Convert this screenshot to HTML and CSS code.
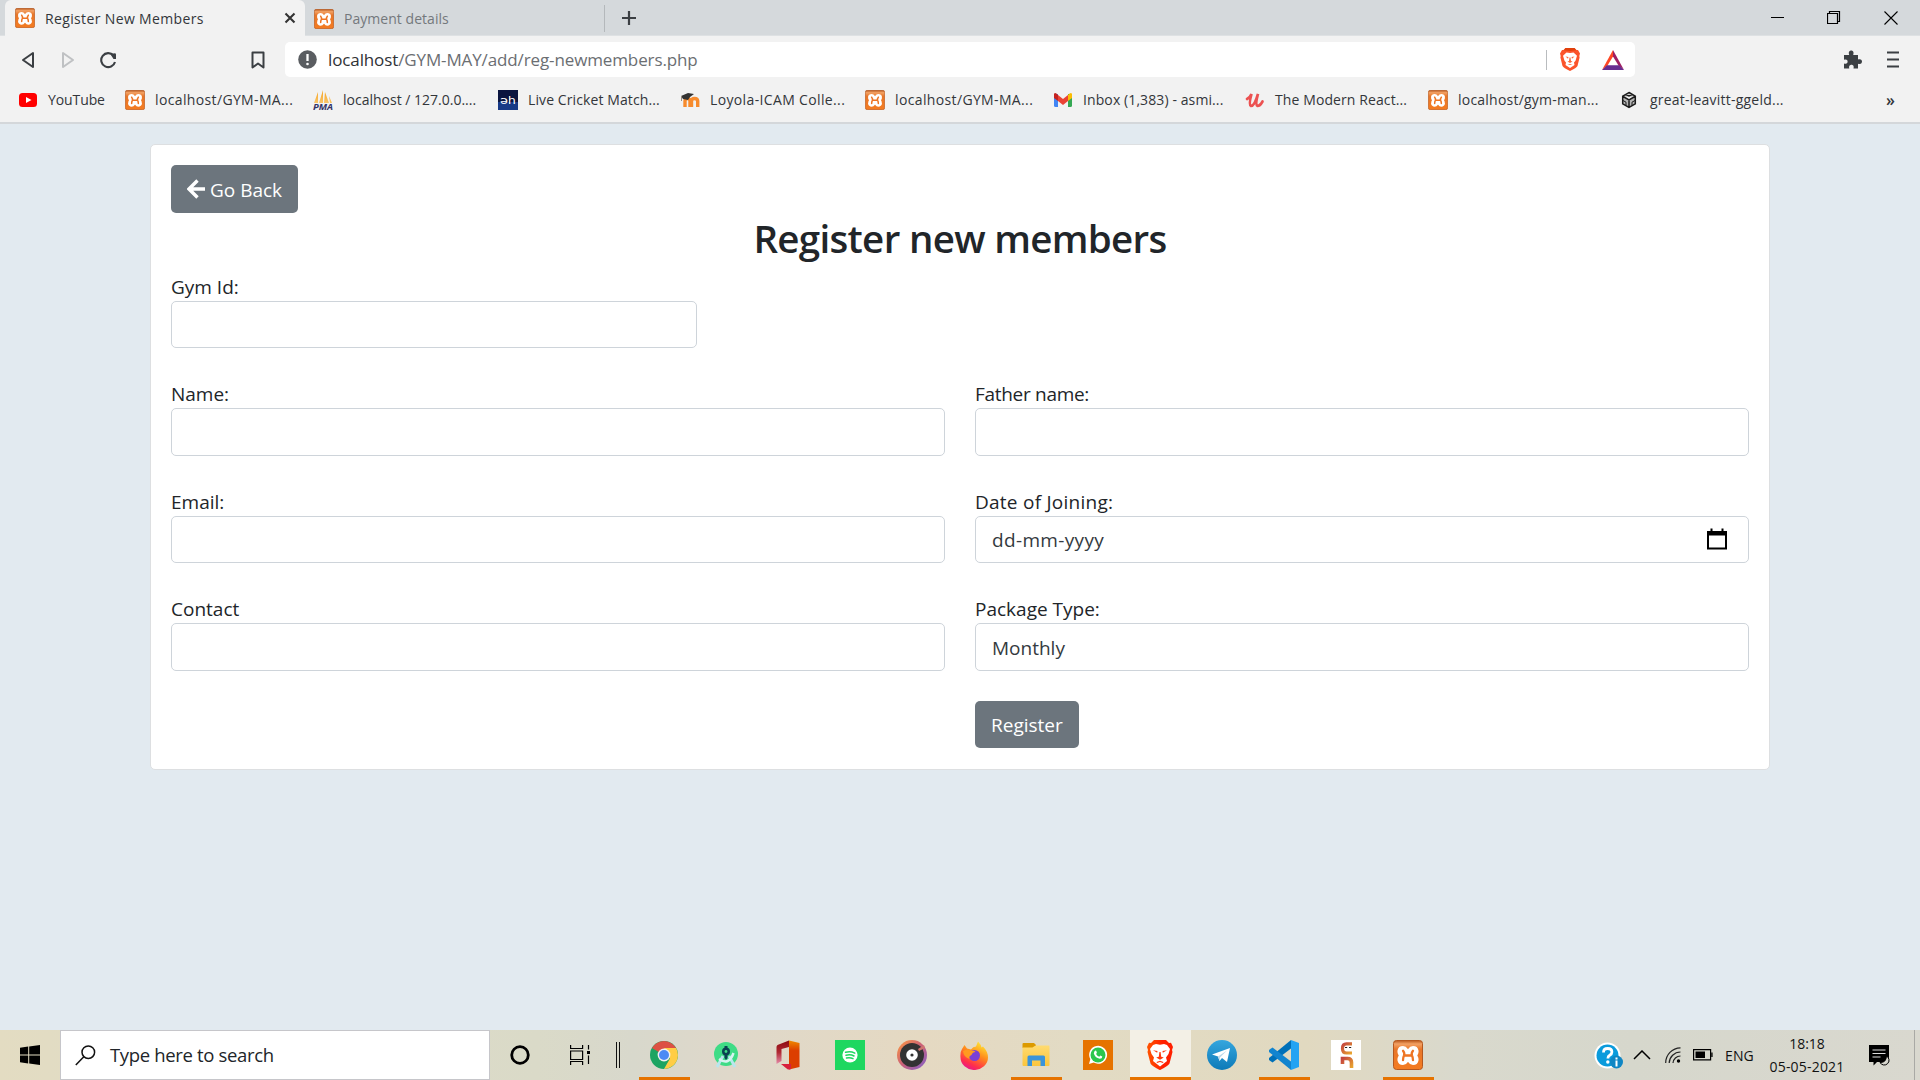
FILE: index.html
```html
<!DOCTYPE html>
<html lang="en">
<head>
<meta charset="utf-8">
<title>Register New Members</title>
<link rel="stylesheet" href="styles.css">
</head>
<body>
<svg class="defs" width="0" height="0" aria-hidden="true">
  <defs>
    <linearGradient id="gOrange" x1="0" y1="0" x2="0" y2="1"><stop offset="0" stop-color="#b9581c"/><stop offset=".12" stop-color="#f3a265"/><stop offset=".3" stop-color="#e8772a"/><stop offset="1" stop-color="#f47b20"/></linearGradient>
    <linearGradient id="gBrave" x1="0" x2="1"><stop offset="0" stop-color="#ff5500"/><stop offset=".6" stop-color="#ff2000"/></linearGradient>
    <linearGradient id="gPma" x1="0" x2="0" y1="0" y2="1"><stop offset="0" stop-color="#f6a11a"/><stop offset="1" stop-color="#f9c56a"/></linearGradient>
    <linearGradient id="gOff" x1="0" y1="0" x2="0" y2="1"><stop offset="0" stop-color="#ef8a00"/><stop offset=".35" stop-color="#dc3e00"/></linearGradient>
    <linearGradient id="gOff2" x1="0" y1="0" x2="0" y2="1"><stop offset="0" stop-color="#8c0a10"/><stop offset=".5" stop-color="#b02832"/><stop offset="1" stop-color="#e58cab"/></linearGradient>
    <linearGradient id="gGroove" x1="0" y1="0" x2="1" y2="1"><stop offset="0" stop-color="#ff9a3c"/><stop offset=".5" stop-color="#c9607a"/><stop offset="1" stop-color="#7d5fd0"/></linearGradient>
    <linearGradient id="gFox" x1=".8" y1="0" x2=".3" y2="1"><stop offset="0" stop-color="#fff036"/><stop offset=".45" stop-color="#ff8a1c"/><stop offset=".8" stop-color="#ff2e4c"/><stop offset="1" stop-color="#e51590"/></linearGradient>
    <linearGradient id="gTg" x1="0" y1="0" x2="0" y2="1"><stop offset="0" stop-color="#35a6de"/><stop offset="1" stop-color="#0d7ab8"/></linearGradient>
    <linearGradient id="gSnake" x1="0" y1="0" x2="1" y2="1"><stop offset="0" stop-color="#c4443f"/><stop offset="1" stop-color="#e9a52f"/></linearGradient>
    <linearGradient id="gFold" x1="0" y1="0" x2="0" y2="1"><stop offset="0" stop-color="#ffdb70"/><stop offset="1" stop-color="#fbc53c"/></linearGradient>
    <symbol id="xampp" viewBox="0 0 30 30">
      <rect x=".5" y=".5" width="29" height="29" rx="3" fill="url(#gOrange)" stroke="#b5581f"/>
      <path d="M15 11.500C12.800 11.500 13.500 8 10 8 6 8 5.200 12.500 8.500 15.500 5.200 18.500 6 23 10 23c3.500 0 2.800-3.500 5-3.500s1.500 3.500 5 3.500c4 0 4.800-4.500 1.500-7.500C24.800 12.500 24 8 20 8c-3.500 0-2.800 3.500-5 3.500z" fill="#fff" stroke="#fff" stroke-width="4" stroke-linejoin="round"/>
      <path d="M10 10.800q2 2.500 1 4.700-1 2-1 4.700M20 10.800q-2 2.500-1 4.700 1 2 1 4.700M11 15.500h8" fill="none" stroke="#ee7524" stroke-width="2.300" stroke-linecap="round"/>
    </symbol>
    <symbol id="lion" viewBox="0 0 26 30">
      <path d="M7 0h12l3 3 2-.3L26 7l-1 3 .5 2-3 11.500c-.6 2-8 6-9.500 6.500-1.500-.5-9-4.500-9.500-6.500L.5 12 1 10 0 7l2-4.300L4 3z" fill="url(#gBrave)"/>
      <path d="M9 4l4 .8 4-.8 3 1 3 4-1.500 5-2.500 3.500 1 3.500-7 5.500L6 21l1-3.500L4.500 14 3 9l3-4z" fill="#fff"/>
      <path d="M6 10.200l4.500.8-.3 1.700zM20 10.200l-4.500.8.3 1.700zM12.400 12h1.200l.6 4.800 2.600.7-3.800 2.200-3.800-2.200 2.600-.7zM9.500 22l3.500-1.300 3.500 1.300-.6 1-2.900-1-2.900 1z" fill="#ff3a10"/>
    </symbol>
    <symbol id="shield" viewBox="0 0 20 23">
      <path d="M5.500 0h9l2 2H18l2 3.500-.7 2.500.3 1.500L17.500 18q-1 2-7.500 5-6.500-3-7.500-5L.4 9.500.7 8 0 5.500 2 2h1.500z" fill="#fb542b"/>
      <path d="M5.500 0h9l1.700 2.300-6.200.7-6.200-.7z" fill="#e0400c"/>
      <path d="M6.500 4.500l3.500.5 3.500-.5 3.500 3.200-1.500 5-1.500 1.800.5 2.500L10 20l-4.500-3 .5-2.500-1.500-1.800L3 7.700z" fill="#fff"/>
      <path d="M5.500 8.500l3 .5-.5 1.800zM14.500 8.500l-3 .5.5 1.800zM9.500 9.500h1l.5 3.500 1.500.6L10 15l-2.500-1.400L9 13zM7.500 17l2.500-1 2.500 1" fill="#fb6a3e"/>
    </symbol>
  </defs>
</svg>

<header class="browser">
  <div class="tabstrip">
    <div class="tab tab-active">
      <svg class="fav"><use href="#xampp"/></svg>
      <span class="tab-title">Register New Members</span>
      <svg class="tab-close" width="12" height="12" viewBox="0 0 12 12"><path d="M1.500 1.500l9 9m0-9l-9 9" stroke="#333" stroke-width="2.100"/></svg>
    </div>
    <div class="tab tab-idle">
      <svg class="fav"><use href="#xampp"/></svg>
      <span class="tab-title">Payment details</span>
    </div>
    <svg class="new-tab" width="16" height="16" viewBox="0 0 16 16"><path d="M8 1v14M1 8h14" stroke="#3b3f43" stroke-width="2.200"/></svg>
    <div class="window-controls">
      <svg width="14" height="14" viewBox="0 0 14 14"><path d="M1 6.500h13" stroke="#000"/></svg>
      <svg width="14" height="14" viewBox="0 0 14 14"><path d="M.5 2.500h10v10H.5zM2.500 2.500v-2h10v10h-2" fill="none" stroke="#000" stroke-width="1.200"/></svg>
      <svg width="14" height="14" viewBox="0 0 14 14"><path d="M.5.5l13 13m0-13l-13 13" stroke="#000" stroke-width="1.100"/></svg>
    </div>
  </div>

  <div class="toolbar">
    <div class="nav">
      <svg width="14" height="18" viewBox="0 0 14 18"><path d="M12 2v14L2 9z" fill="none" stroke="#3b3f43" stroke-width="2" stroke-linejoin="round"/></svg>
      <svg width="14" height="18" viewBox="0 0 14 18"><path d="M2 2v14l10-7z" fill="none" stroke="#bfc1c3" stroke-width="2" stroke-linejoin="round"/></svg>
      <svg class="reload" width="18" height="18" viewBox="0 0 18 18"><path d="M14.500 4.500A7 7 0 1 0 16 11" fill="none" stroke="#3b3f43" stroke-width="2.100"/><path d="M11 2.500h3.500q3-1 2.500 1.500V8h-2.500z" fill="#3b3f43"/></svg>
    </div>
    <svg class="save" width="14" height="18" viewBox="0 0 14 18"><path d="M1.500 1.500h11v15L7 12.500l-5.500 4z" fill="none" stroke="#3b3f43" stroke-width="2" stroke-linejoin="round"/></svg>
    <div class="address">
      <svg class="info" width="19" height="19" viewBox="0 0 19 19"><circle cx="9.500" cy="9.500" r="9.300" fill="#5a5d61"/><path d="M9.500 4v7" stroke="#fff" stroke-width="2.300"/><circle cx="9.500" cy="14" r="1.300" fill="#fff"/></svg>
      <span class="url"><b>localhost</b>/GYM-MAY/add/reg-newmembers.php</span>
      <span class="address-rule"></span>
      <svg class="shield" width="20" height="23"><use href="#shield"/></svg>
      <svg class="bat" width="22" height="20" viewBox="0 0 22 20"><path d="M11 0v6.500L5.500 15.500 0 20z" fill="#ff4724"/><path d="M11 0l11 20-5.500-4.500L11 6.500z" fill="#9e1f63"/><path d="M0 20l5-4.700h12L22 20z" fill="#662d91"/></svg>
    </div>
    <svg class="puzzle" width="19" height="19" viewBox="0 0 19 19"><path d="M1 5h5.200C5 1.500 7 .5 8.200.5s3.200 1 2 4.500H15v4.500c3-1 4 .7 4 2s-1 3.200-4 2.200V18.500h-4.500c.8-3-.8-3.800-2-3.800s-3 .8-2.200 3.800H1v-5c3 .8 3.600-.8 3.600-1.900S4 8.900 1 9.800z" fill="#3b3f43"/></svg>
    <svg class="menu" width="12" height="17" viewBox="0 0 12 17"><path d="M0 1.500h12M0 8.500h12M0 15.500h12" stroke="#3b3f43" stroke-width="2"/></svg>
  </div>

  <nav class="bookmarks">
    <a><svg class="bm" viewBox="0 0 20 20"><rect x="1" y="3" width="18" height="14" rx="3.500" fill="#f00"/><path d="M8 7l5.500 3L8 13z" fill="#fff"/></svg>YouTube</a>
    <a class="loose"><svg class="bm"><use href="#xampp"/></svg>localhost/GYM-MA...</a>
    <a class="flat"><svg class="bm" viewBox="0 0 20 20"><path d="M5 2v11H1zM10 0v13H6zM12 2l4 11h-5zM16 6l3 7h-2z" fill="url(#gPma)"/><text x="0" y="19.500" textLength="20" lengthAdjust="spacingAndGlyphs" class="pma">PMA</text></svg>localhost / 127.0.0....</a>
    <a><svg class="bm" viewBox="0 0 20 20"><path fill="#0b1540" d="M0 0h20v12H0z"/><path fill="#183a86" d="M0 12h20v8H0z"/><text x="2" y="14" textLength="16" lengthAdjust="spacingAndGlyphs" class="dh">əh</text></svg>Live Cricket Match...</a>
    <a class="loose"><svg class="bm" viewBox="0 0 20 20"><path d="M5 17v-6q0-2.500 2.500-2.500T10 11v6M11.500 17v-6q0-2.500 3-2.500t3.200 2.500v6" fill="none" stroke="#f78b2d" stroke-width="3.400"/><path d="M1 6l7-3 6 1-4 3-2 3-5-1z" fill="#333"/><path d="M1.500 6v5" stroke="#9b8e80"/></svg>Loyola-ICAM Colle...</a>
    <a class="loose"><svg class="bm"><use href="#xampp"/></svg>localhost/GYM-MA...</a>
    <a><svg class="bm" viewBox="0 0 20 20"><path fill="#4285f4" d="M1 4h4v13H2.500Q1 17 1 15.500z"/><path fill="#34a853" d="M15 4h4v11.500q0 1.500-1.500 1.500H15z"/><path fill="#fbbc04" d="M15 5q3-3.500 4-1v4l-4 3z"/><path fill="#c5221f" d="M5 5Q2 1.500 1 4v4l4 3z"/><path fill="#ea4335" d="M5 5l5 4 5-4v6l-5 4-5-4z"/></svg>Inbox (1,383) - asmi...</a>
    <a><svg class="bm" viewBox="0 0 20 20"><path d="M2 9q3-1.500 4.500-5-3 11-.5 12Q9.500 16 13 4q-3 11-.5 12 2.500 0 5-4.500" fill="none" stroke="#ec5252" stroke-width="2.700" stroke-linecap="round"/></svg>The Modern React...</a>
    <a class="medium"><svg class="bm"><use href="#xampp"/></svg>localhost/gym-man...</a>
    <a class="medium"><svg class="bm" viewBox="0 0 20 20"><path d="M9 2.500l6.300 3.700v7.600L9 17.500l-6.300-3.700V6.200zM3 6.500L9 10l6-3.500M9 10v7M6 4.500L9 6l3-1.500" fill="#b5b5b5" stroke="#1b1b1b" stroke-width="1.500"/><path d="M3 10.500l3 1.700v3M15 10.500l-3 1.700v3" fill="none" stroke="#1b1b1b"/></svg>great-leavitt-ggeld...</a>
    <span class="more">»</span>
  </nav>
</header>

<main class="page">
  <section class="card">
    <button class="btn btn-back" type="button"><svg width="19" height="20" viewBox="0 0 19 20"><path d="M10.500 1.500L2 10l8.500 8.500M2.500 10H18" fill="none" stroke="#fff" stroke-width="3.400"/></svg>Go Back</button>
    <h2>Register new members</h2>
    <form class="form">
      <div class="field gym"><label>Gym Id:</label><div class="control"></div></div>
      <div class="field"><label>Name:</label><div class="control"></div></div>
      <div class="field"><label class="snug">Father name:</label><div class="control"></div></div>
      <div class="field"><label>Email:</label><div class="control"></div></div>
      <div class="field"><label class="airy">Date of Joining:</label><div class="control"><span class="date">dd-mm-yyyy</span><svg width="20" height="22" viewBox="0 0 20 22"><path d="M1 5h18v15.500H1z" fill="none" stroke="#000" stroke-width="2"/><path d="M0 3h20v4.500H0zM3.500.5h2v3h-2zM14.500.5h2v3h-2z"/></svg></div></div>
      <div class="field"><label>Contact</label><div class="control"></div></div>
      <div class="field"><label>Package Type:</label><div class="control"><span class="select">Monthly</span></div></div>
      <button class="btn btn-register" type="button">Register</button>
    </form>
  </section>
</main>

<footer class="taskbar">
  <div class="start"><svg width="20" height="20" viewBox="0 0 20 20"><path d="M0 2.800l8.200-1.200v8H0zM9.200 1.400L20 0v9.600H9.200zM0 10.500h8.200v8L0 17.300zM9.200 10.500H20V20L9.200 18.600z"/></svg></div>
  <div class="search">
    <svg width="21" height="21" viewBox="0 0 21 21"><circle cx="13.300" cy="7.200" r="6.300" fill="none" stroke="#111" stroke-width="1.500"/><path d="M8.800 11.700L.8 20" stroke="#111" stroke-width="1.500"/></svg>
    <span>Type here to search</span>
  </div>
  <div class="cell cell-tool"><svg width="20" height="20" viewBox="0 0 20 20"><circle cx="10" cy="10" r="8.300" fill="none" stroke="#000" stroke-width="2.800"/></svg></div>
  <div class="cell cell-tool"><svg width="21" height="20" viewBox="0 0 21 20"><path d="M.6 0v3.500h12V0M.6 6h12v8.500H.6zM.6 20v-3.500h12V20M18.500 0v4.500M18.500 10.500V19" fill="none" stroke="#000" stroke-width="1.200"/><path d="M17 6h3v3h-3z"/></svg></div>
  <div class="grip"></div>
  <div class="apps">
    <div class="cell open"><svg width="28" height="28" viewBox="0 0 28 28"><circle cx="14" cy="14" r="14" fill="#1da462"/><path d="M14 14L1.900 7A14 14 0 0 1 26.100 7z" fill="#dd5144"/><path d="M14 7h12.100A14 14 0 0 1 14 28l6-10.500z" fill="#ffcd46"/><circle cx="14" cy="14" r="6.400" fill="#f1f1f1"/><circle cx="14" cy="14" r="5" fill="#4c8bf5"/></svg></div>
    <div class="cell"><svg width="28" height="28" viewBox="0 0 28 28"><circle cx="14" cy="13" r="12" fill="#3fdc86"/><path d="M11 15L5 26M17 15l6 11" stroke="#b8e6ee" stroke-width="2.800"/><path d="M7 18q10 7 14.500-6" fill="none" stroke="#d8f3f0" stroke-width="2.500"/><circle cx="14" cy="10.500" r="4" fill="#0b4252"/><path d="M12.500 5h3v12l-1.500 2-1.500-2z" fill="#0b4252"/><circle cx="14" cy="10.500" r="1.400" fill="#3ddc84"/></svg></div>
    <div class="cell"><svg width="24" height="30" viewBox="0 0 24 30"><path d="M13 .5L23.500 3v24L13 29.500z" fill="url(#gOff)"/><path d="M13 .5L1.500 5Q.5 6 .5 7v17l5-3V9L13 7z" fill="url(#gOff2)"/><path d="M5 24h10v5q-2 1-3.500.3z" fill="#d8203c"/></svg></div>
    <div class="cell"><svg width="30" height="30" viewBox="0 0 30 30"><path fill="#1ed760" d="M0 0h30v30H0z"/><circle cx="15" cy="15" r="7.600" fill="#fff"/><path d="M10.500 12.300q5-1.500 9.300.8M11 15.200q4.500-1.200 8 .8M11.500 18q3.500-1 6.500.7" fill="none" stroke="#1ed760" stroke-width="1.500" stroke-linecap="round"/></svg></div>
    <div class="cell"><svg width="30" height="30" viewBox="0 0 30 30"><circle cx="15" cy="15" r="15" fill="url(#gGroove)"/><circle cx="15" cy="15" r="12" fill="#333"/><path d="M21 9l6-4 1 3-6 3z" fill="#cf7370"/><circle cx="15" cy="15" r="5.800" fill="#fff"/><circle cx="15" cy="15" r="1.600" fill="#333"/></svg></div>
    <div class="cell"><svg width="28" height="29" viewBox="0 0 28 29"><path d="M2 8l2.500-4 2.500 3.500 4 1q2-3 5-3l2-5q3 3 3.500 6l1.500-1q5 5 5 11a13.500 12.300 0 0 1-27.500 0Q0 11 2 8z" fill="url(#gFox)"/><circle cx="14.500" cy="14.500" r="5.500" fill="#7b3fd6"/><path d="M3 10q5-3 8 0 3-1 4.500 1-3 0-4 3-3 1-2 4-6-2-6.500-8z" fill="#ff9a20"/></svg></div>
    <div class="cell open"><svg width="28" height="24" viewBox="0 0 28 24"><path d="M.5 1q0-1 1-1H12l2 2v3H.5z" fill="#dc9a00"/><path d="M.5 4.500h10l3-2H27q.5 0 .5 1V22q0 1-1 1H1.500q-1 0-1-1z" fill="url(#gFold)"/><path d="M5.500 23V14q0-1.500 1.500-1.500h14.500Q23 12.500 23 14v9h-4.500v-5.500h-8.500V23z" fill="#3a94da"/></svg></div>
    <div class="cell"><svg width="30" height="30" viewBox="0 0 30 30"><path fill="#e67300" d="M0 0h30v30H0z"/><path d="M6 24l1.300-4.800a9 9 0 1 1 3.400 3.400z" fill="#fff"/><circle cx="15" cy="15" r="7.500" fill="#2cc64e"/><path d="M11.500 11.200q1.500-1.500 2 .3l.4 1.200-.8 1.200q1 2 3.200 2.800l1-1.200 2 1q0 2.200-2.500 2.200-5-1-6-5.500z" fill="#fff"/></svg></div>
    <div class="cell open current"><svg width="26" height="30"><use href="#lion"/></svg></div>
    <div class="cell"><svg width="30" height="30" viewBox="0 0 30 30"><circle cx="15" cy="15" r="15" fill="url(#gTg)"/><path d="M5 14.500L23 8l-3 14-5-4-2.500 3-1.500-4.500z" fill="#fff"/><path d="M11 16.500l9-6-7 7-.5 3.500z" fill="#bcd9ea"/></svg></div>
    <div class="cell open"><svg width="30" height="30" viewBox="0 0 30 30"><path d="M22 0l8 3v24l-8 3z" fill="#23a3f3"/><path d="M22 0v8.500L3.500 22.500 0 20v-2z" fill="#0070b8"/><path d="M22 30v-8.500L3.500 7.500 0 10v2z" fill="#1284cf"/></svg></div>
    <div class="cell"><svg width="30" height="30" viewBox="0 0 30 30"><path fill="#fff" d="M0 0h30v30H0z"/><path d="M21 3.800h-5.500q-4 0-4 4.600t4 4.600H21" fill="none" stroke="url(#gSnake)" stroke-width="3.200"/><path d="M11.500 24v-5.500h5q4 0 4 4V28" fill="none" stroke="url(#gSnake)" stroke-width="3.600"/><path d="M14 7.500h2.200M18 7.500h2.200" stroke="#222"/></svg></div>
    <div class="cell open"><svg width="30" height="30"><use href="#xampp"/></svg></div>
  </div>
  <div class="tray">
    <svg class="t-help" width="29" height="27" viewBox="0 0 29 27"><circle cx="13.500" cy="13.500" r="13" fill="#fff"/><circle cx="13.500" cy="13.500" r="11" fill="#0a9bdc"/><path d="M9.500 10.500q0-4 4.200-4t4.200 3.500q0 2-2.200 3.200-1.800 1-1.800 3.300" fill="none" stroke="#fff" stroke-width="2.800"/><circle cx="13.800" cy="20" r="1.700" fill="#fff"/><circle cx="22.500" cy="20" r="6.500" fill="#0f86c4"/><path d="M22.500 18.500v6M22.500 15.500v2" stroke="#fff" stroke-width="2"/></svg>
    <svg class="t-up" width="18" height="10" viewBox="0 0 18 10"><path d="M1 9l8-8 8 8" fill="none" stroke="#000" stroke-width="1.500"/></svg>
    <svg class="t-wifi" width="16" height="16" viewBox="0 0 16 16"><path d="M.7 16A15 15 0 0 1 15.500.8M4.200 16A11.300 11.300 0 0 1 15.500 5M8 16a7.600 7.600 0 0 1 7.500-7" fill="none" stroke="#222" stroke-width="1.200"/><circle cx="13.500" cy="14" r="1.700"/></svg>
    <svg class="t-bat" width="20" height="12" viewBox="0 0 20 12"><path d="M.6.6h17v10.300H.6zM19 3.500V8" fill="none" stroke="#000" stroke-width="1.200"/><path d="M2.500 2.500h9.500V9H2.500z"/></svg>
    <span class="t-lang">ENG</span>
    <div class="clock"><span>18:18</span><span class="clock-date">05-05-2021</span></div>
    <svg class="t-note" width="21" height="21" viewBox="0 0 21 21"><path d="M0 0h20v17H8l-3.500 3.500V17H0z"/><path d="M3.500 5h13M3.500 8.500h13M3.500 12h8" stroke="#ddd" stroke-width="1.200"/><path d="M17.500 11a4.800 4.800 0 1 1-6.500 6.500q6 .5 6.500-6.500z" fill="#d9d8cf" stroke="#000"/></svg>
    <span class="peek"></span>
  </div>
</footer>
</body>
</html>
```
FILE: styles.css
```css
* { box-sizing: border-box; }
html, body { height: 100%; }
body {
  margin: 0;
  display: flex;
  flex-direction: column;
  overflow: hidden;
  font-family: "Open Sans", "Noto Sans", sans-serif;
  color: #212529;
  background: #e2eaf0;
}
svg { display: block; flex: none; }
.defs { position: absolute; }

/* Browser chrome */
.browser { height: 124px; background: #f2f2f2; border-bottom: 2px solid #d4d7da; }
.tabstrip { display: flex; align-items: center; height: 36px; padding-left: 5px; background: #d5d9dc; border-bottom: 1px solid #dee1e3; }
.tab { display: flex; align-items: center; height: 36px; padding: 1px 10px 0; font-size: 14px; }
.tab-active { width: 300px; background: #f2f2f2; border-radius: 6px 6px 0 0; color: #33363a; letter-spacing: .36px; }
.tab-idle { width: 300px; height: 27px; margin-top: 1px; padding-left: 9px; border-right: 1px solid #b4b8bb; color: #74787c; letter-spacing: .04px; }
.fav { width: 20px; height: 20px; }
.tab-title { margin-left: 10px; flex: 1; white-space: nowrap; }
.tab-close { margin-right: -1px; }
.new-tab { margin-left: 16px; }
.window-controls { display: flex; gap: 43px; margin-left: auto; padding-right: 22px; }
.toolbar { display: flex; align-items: center; height: 47px; padding: 0 21px; }
.nav { display: flex; align-items: center; gap: 26px; width: 230px; }
.reload { margin-left: -2px; }
.save { margin-right: 20px; }
.address { display: flex; align-items: center; width: 1350px; height: 35px; padding: 0 11px 0 13px; background: #fff; border-radius: 5px; }
.url { margin-left: 11px; flex: 1; font-size: 17px; letter-spacing: -.12px; color: #6b6e72; }
.url b { font-weight: 400; color: #303236; }
.address-rule { width: 1px; height: 20px; background: #b9bcbf; }
.shield { margin-left: 13px; }
.bat { margin-left: 22px; }
.puzzle { margin-left: auto; }
.menu { margin-left: 25px; }
.bookmarks {
  display: grid;
  grid-template-columns: 107px 188px 185px 182px 185px 188px 192px 183px 192px 229px 1fr;
  align-items: center;
  height: 33px;
  padding-left: 18px;
  font-size: 14px;
  letter-spacing: .1px;
  color: #33363a;
  white-space: nowrap;
}
.bookmarks a { display: flex; align-items: center; gap: 10px; }
.bookmarks a:first-child { letter-spacing: -.1px; }
.bookmarks .flat { letter-spacing: 0; }
.bookmarks .loose { letter-spacing: .36px; }
.bookmarks .medium { letter-spacing: .22px; }
.bm { width: 20px; height: 20px; }
.pma { font: italic bold 8px "Open Sans", sans-serif; letter-spacing: 0; fill: #333366; }
.dh { font: 11px "DejaVu Sans", sans-serif; letter-spacing: 0; fill: #fff; }
.more { padding-left: 37px; font-weight: 600; font-size: 16px; }

/* Registration page */
.page { flex: 1; padding: 20px 150px 0; }
.card { height: 626px; padding: 20px; background: #fff; border: 1px solid #dddfe1; border-radius: 5px; font-size: 19px; }
.btn { display: flex; align-items: center; height: 47.500px; padding: 2px 16px 0; border: 0; border-radius: 5px; background: #6c757d; color: #fff; font: inherit; white-space: nowrap; }
.btn-back { width: 127px; height: 48px; gap: 4px; }
.btn-back svg { margin-top: -2px; }
h2 { margin: 0 0 9.600px; height: 48px; line-height: 50px; font-size: 38.500px; font-weight: 600; letter-spacing: -.68px; text-align: center; }
.form { display: grid; grid-template-columns: 1fr 1fr; grid-auto-rows: 77.500px; gap: 30px; }
.gym { grid-column: 1 / -1; width: 526px; }
.field label { display: block; height: 30px; line-height: 32px; }
.field .snug { letter-spacing: -.3px; }
.field .airy { letter-spacing: .25px; }
.control { display: flex; align-items: center; justify-content: space-between; height: 47.500px; padding: 2px 21px 0 16px; border: 1px solid #ced4da; border-radius: 5px; color: #343a40; }
.control svg { margin-top: -3px; }
.date { letter-spacing: .35px; }
.btn-register { grid-column: 2; width: 104px; }

/* Taskbar */
.taskbar {
  display: flex;
  height: 50px;
  background: linear-gradient(90deg, #e3dcc2 0, #dfdcc6 10%, #dadac8 28%, #d8d8cc 33%, #dfd8ca 38%, #e5d9c2 48%, #e2dbc4 56%, #e1d9c0 68%, #d9d9cd 76%, #d6d7cc 85%, #d9d8cf 100%);
}
.start { width: 60px; padding: 15px 20px; }
.search { display: flex; align-items: center; gap: 14px; width: 430px; padding-left: 14px; background: #fff; border: 1px solid #c6c6ca; font-size: 18.500px; letter-spacing: -.34px; }
.search span { margin-top: -1px; }
.cell { display: flex; align-items: center; justify-content: center; width: 62px; }
.cell-tool { width: 60px; }
.grip { width: 4px; height: 26px; margin: 12px 0 0 6px; border: solid #111; border-width: 0 1px; }
.apps { display: flex; margin-left: 13px; }
.open { background: linear-gradient(#e67300, #e67300) 6px 100% / 51px 3px no-repeat; }
.current { width: 61px; margin-left: 1px; padding-right: 1px; background: linear-gradient(#e67300, #e67300) 0 100% / 61px 3px no-repeat, #f3f0e6; }
.tray { display: flex; align-items: center; flex: 1; padding-left: 155px; color: #111; font-size: 14px; }
.t-up { margin-left: 10px; }
.t-wifi { margin-left: 14px; }
.t-bat { margin-left: 12px; }
.t-lang { margin-left: 12px; width: 30px; letter-spacing: .1px; }
.clock { display: flex; flex-direction: column; align-items: center; width: 76px; margin-left: 14px; line-height: 23px; white-space: nowrap; }
.clock-date { letter-spacing: .2px; }
.t-note { margin-left: 24px; }
.peek { width: 1px; height: 50px; margin-left: 24px; background: #a9a9a5; }
```
